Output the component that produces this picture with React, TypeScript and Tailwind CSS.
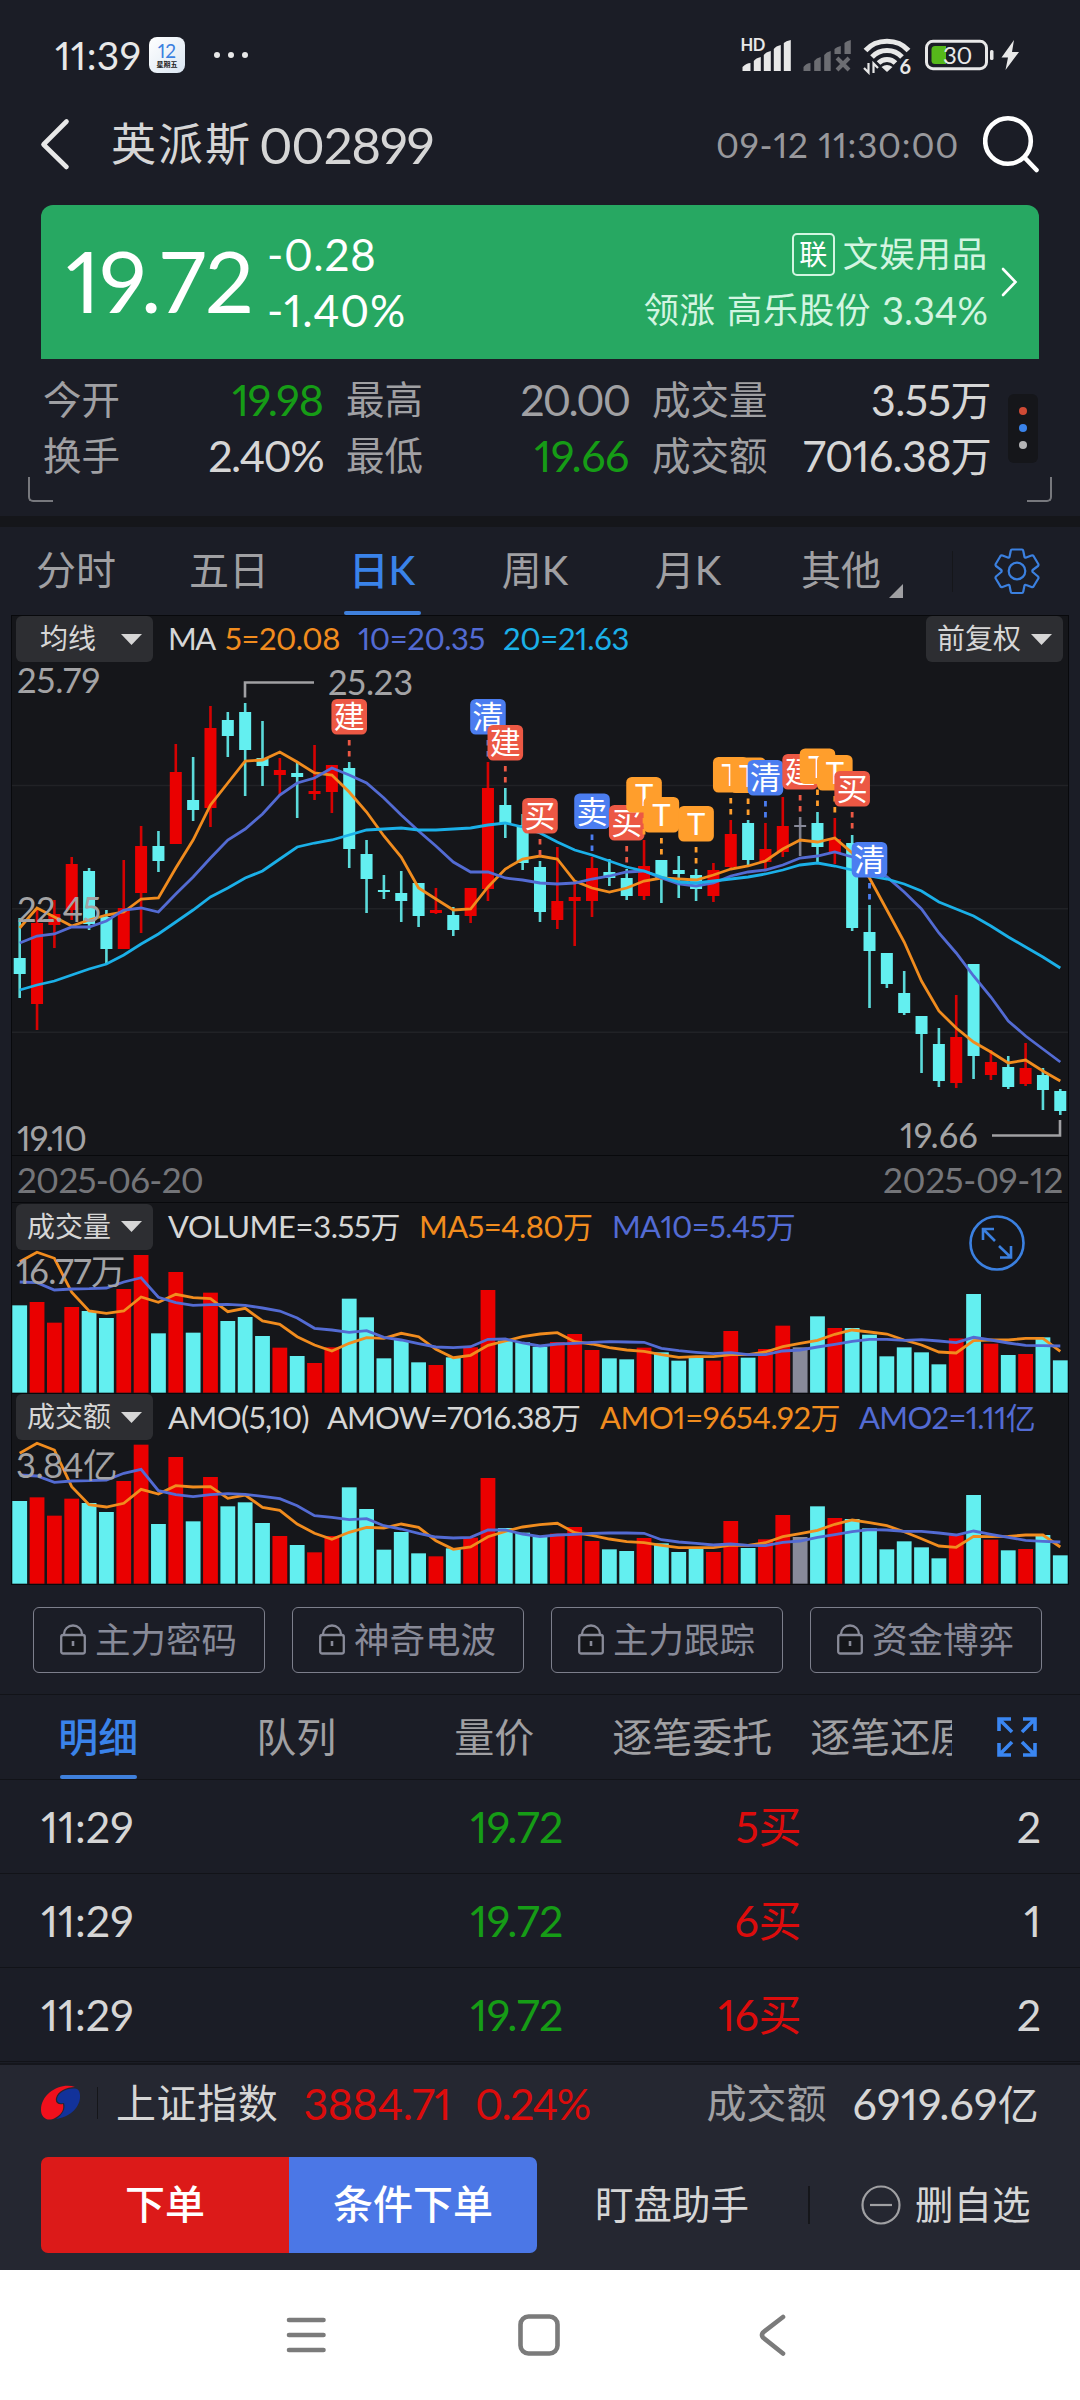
import clsx from 'clsx'
import React from 'react'

// ---------------- Data ----------------
// [kind, high, body top, body bottom, low], r = up, c = down, g = flat
type Candle = [string, number, number, number, number]

const candles: Candle[] = [
  ['c', 258, 298, 314, 338], ['r', 248, 263, 344, 370], ['r', 240, 254, 265, 288], ['r', 197, 204, 250, 260],
  ['c', 208, 211, 264, 270], ['c', 250, 257, 289, 303], ['r', 200, 248, 289, 289], ['r', 166, 186, 233, 273],
  ['c', 171, 186, 201, 212], ['r', 84, 112, 184, 184], ['c', 97, 140, 150, 161], ['r', 46, 68, 148, 167],
  ['c', 52, 60, 76, 97], ['c', 43, 52, 90, 136], ['c', 61, 98, 106, 126], ['r', 98, 110, 115, 136],
  ['c', 102, 113, 117, 158], ['r', 85, 131, 134, 140], ['r', 105, 105, 132, 153], ['c', 102, 108, 189, 208],
  ['c', 180, 194, 219, 253], ['c', 215, 230, 232, 239], ['c', 211, 233, 241, 262], ['c', 223, 223, 256, 267],
  ['r', 228, 250, 253, 254], ['c', 247, 255, 270, 276], ['r', 228, 228, 256, 263], ['r', 102, 128, 229, 241],
  ['c', 128, 145, 163, 178], ['c', 154, 165, 203, 210], ['c', 201, 207, 252, 262], ['r', 187, 241, 260, 269],
  ['r', 220, 237, 241, 286], ['r', 197, 208, 241, 257], ['c', 199, 212, 218, 226], ['c', 209, 218, 236, 240],
  ['r', 180, 206, 236, 240], ['c', 200, 200, 218, 243], ['c', 196, 210, 214, 238], ['c', 209, 215, 229, 241],
  ['r', 203, 210, 236, 242], ['r', 160, 174, 207, 210], ['c', 160, 163, 200, 205], ['r', 163, 189, 202, 211],
  ['r', 137, 166, 192, 197], ['g', 157, 165, 167, 196], ['c', 152, 163, 187, 203], ['r', 158, 179, 193, 204],
  ['c', 175, 183, 268, 271], ['c', 245, 272, 291, 348], ['c', 293, 293, 324, 328], ['c', 311, 333, 353, 355],
  ['c', 356, 356, 374, 413], ['c', 368, 384, 421, 427], ['r', 335, 377, 423, 428], ['c', 304, 304, 396, 419],
  ['r', 390, 402, 415, 420], ['c', 396, 407, 427, 429], ['r', 383, 408, 424, 426], ['c', 408, 415, 430, 450],
  ['c', 429, 431, 451, 455],
]

const ma5 = [268, 248, 257, 266, 260, 255, 252, 239, 238, 208, 180, 145, 123, 101, 100, 92, 102, 113, 115, 132, 152, 176, 197, 228, 239, 250, 249, 227, 209, 199, 196, 199, 221, 228, 232, 228, 221, 218, 219, 220, 215, 209, 206, 201, 189, 180, 182, 178, 193, 218, 250, 282, 321, 351, 368, 382, 392, 403, 400, 411, 421]
const ma10 = [283, 276, 274, 267, 267, 261, 250, 248, 252, 234, 217, 198, 180, 169, 154, 135, 123, 118, 108, 115, 123, 138, 155, 171, 186, 202, 212, 212, 218, 220, 223, 224, 223, 219, 216, 212, 211, 218, 224, 226, 223, 216, 212, 210, 205, 198, 196, 192, 197, 206, 217, 232, 249, 273, 293, 316, 337, 361, 376, 389, 402]
const ma20 = [330, 325, 321, 315, 309, 304, 295, 284, 274, 262, 250, 237, 228, 218, 211, 199, 187, 183, 180, 175, 170, 169, 168, 170, 170, 169, 168, 165, 163, 167, 173, 182, 190, 195, 201, 207, 211, 217, 222, 223, 221, 219, 217, 214, 210, 205, 203, 206, 210, 216, 219, 224, 231, 242, 249, 256, 266, 277, 287, 297, 308]

// bar tops and average lines, three units to a pixel
const volume = {
  base: 788,
  top: [526, 516, 578, 531, 543, 564, 477, 375, 610, 426, 608, 488, 573, 561, 618, 653, 678, 699, 652, 506, 562, 685, 630, 697, 705, 682, 652, 480, 632, 637, 650, 636, 612, 660, 685, 688, 653, 667, 692, 682, 692, 603, 683, 657, 587, 652, 559, 594, 594, 614, 679, 652, 667, 703, 625, 492, 641, 675, 672, 622, 691],
  avg5: [395, 367, 385, 487, 543, 550, 543, 501, 517, 493, 503, 506, 545, 535, 573, 583, 620, 645, 663, 640, 623, 625, 610, 620, 658, 683, 676, 646, 633, 620, 612, 608, 635, 642, 653, 660, 664, 674, 682, 680, 680, 674, 674, 666, 650, 640, 631, 613, 600, 606, 612, 630, 645, 666, 669, 632, 630, 630, 625, 625, 664],
  avg10: [456, 458, 480, 477, 476, 474, 456, 443, 502, 518, 526, 524, 523, 526, 534, 543, 564, 595, 600, 607, 602, 622, 630, 641, 651, 653, 650, 628, 627, 639, 648, 642, 640, 637, 635, 636, 637, 655, 662, 667, 671, 668, 674, 674, 663, 660, 651, 643, 634, 628, 628, 631, 629, 633, 638, 622, 630, 639, 646, 647, 648],
}
const amount = {
  base: 1361,
  top: [1113, 1102, 1157, 1106, 1119, 1146, 1053, 944, 1182, 981, 1174, 1041, 1129, 1117, 1179, 1218, 1245, 1267, 1218, 1072, 1137, 1259, 1206, 1270, 1279, 1255, 1223, 1044, 1194, 1208, 1220, 1211, 1191, 1233, 1258, 1263, 1224, 1240, 1266, 1257, 1266, 1173, 1254, 1228, 1155, 1221, 1129, 1164, 1167, 1195, 1258, 1234, 1252, 1285, 1216, 1095, 1229, 1261, 1257, 1215, 1276],
  avg5: [970, 940, 960, 1070, 1124, 1131, 1120, 1078, 1092, 1067, 1071, 1070, 1105, 1095, 1132, 1141, 1182, 1210, 1228, 1207, 1192, 1194, 1182, 1192, 1232, 1258, 1251, 1220, 1204, 1191, 1184, 1180, 1208, 1216, 1227, 1235, 1238, 1246, 1253, 1253, 1253, 1245, 1246, 1238, 1220, 1211, 1201, 1183, 1170, 1178, 1187, 1205, 1226, 1248, 1252, 1219, 1220, 1219, 1215, 1215, 1251],
  avg10: [1035, 1038, 1057, 1053, 1052, 1050, 1030, 1018, 1082, 1094, 1100, 1094, 1091, 1093, 1099, 1106, 1127, 1157, 1162, 1169, 1166, 1187, 1197, 1210, 1221, 1224, 1222, 1200, 1200, 1212, 1220, 1215, 1213, 1210, 1209, 1209, 1210, 1229, 1236, 1240, 1245, 1242, 1246, 1247, 1237, 1233, 1222, 1214, 1205, 1199, 1200, 1204, 1204, 1209, 1215, 1203, 1213, 1222, 1231, 1234, 1236],
}

// [candle index, top, label]
const markers: [number, number, string][] = [
  [19, 39, '建'], [27, 39, '清'], [28, 65, '建'], [30, 138, '买'], [33, 133.5, '卖'], [35, 145, '买'],
  [36, 117, 'T'], [37, 137, 'T'], [39, 146, 'T'], [41, 97, 'T'], [42, 97.5, 'T'], [43, 100, '清'],
  [45, 94, '建'], [46, 88.5, 'T'], [47, 95, 'T'], [48, 111, '买'], [49, 182, '清'],
]

const RED = '#ea0000'
const CYAN = '#63eff0'
const GRAY = '#888a9a'
const ORANGE = '#f18c1e'
const INDIGO = '#536bd3'
const SKY = '#1bb0e8'

const xAt = (i: number) => 19.7 + i * 17.343
const fill = (kind: string) => (kind === 'r' ? RED : kind === 'c' ? CYAN : GRAY)
const badge = (label: string) =>
  label === 'T' ? '#ff9e2c' : label === '清' || label === '卖' ? '#4b7df0' : '#ec5844'
const line = (ys: number[]) => ys.map((y, i) => `${xAt(i).toFixed(1)},${y.toFixed(1)}`).join(' ')

// ---------------- Icons ----------------
const StatusIcons = () => (
  <svg width="290" height="40" viewBox="738 35 290 40" className="font-bold">
    <text x="740.5" y="51" fontSize="16.5" fill="#e8e8e8" letterSpacing="-0.5">HD</text>
    <g fill="#e8e8e8">
      <path d="M742.5 71v-4q4-4 8-4v8zM753.8 71V61q2-3 7-4v14zM763.8 71V55q2-3 7-4v20zM773.8 71V49q2-3 7-4v26zM783.8 71V43q2-2 7-3v31z" />
    </g>
    <g fill="#6c6d72">
      <path d="M803.5 71v-4q3-4 7-4v8zM814.2 71V61q2-3 6.5-4v14zM824.2 71V55q2-3 6.5-4v20zM834.5 54v-5q2-2 6.3-3v8zM844.5 54V43q2-2 6.3-3v14z" />
    </g>
    <path d="M837 58l12 12M849 58l-12 12" stroke="#6c6d72" strokeWidth="4" />
    <g fill="none" stroke="#e8e8e8" strokeWidth="5">
      <path d="M865.5 50.5q8-9.300 21.500-9.300t21.500 9.300" />
      <path d="M872 57q6-6.500 15-6.500t15 6.500" />
      <path d="M878.500 63q3.500-3.500 8.500-3.500t8.500 3.500" />
    </g>
    <path d="M881.500 67q5.500-4 11 0l-5.500 5z" fill="#e8e8e8" />
    <path d="M868.500 63v9.500l-4.500-4.500M873.500 73v-9.500l4.500 4.500" stroke="#e8e8e8" strokeWidth="2.200" fill="none" />
    <text x="899.500" y="73.500" fontSize="20" fill="#e8e8e8">6</text>
    <rect x="926.500" y="41.300" width="60" height="27.400" rx="6.500" fill="none" stroke="#e8e8e8" strokeWidth="3" />
    <path d="M935 46h11v18h-11q-3.500 0-3.500-3.500v-11q0-3.500 3.500-3.500z" fill="#56b81a" />
    <rect x="990" y="50" width="3.500" height="10" rx="1.500" fill="#e8e8e8" />
    <text x="943" y="64" fontSize="24" fontWeight="400" fill="#e8e8e8" letterSpacing="-0.300">30</text>
    <path d="M1014 40l-12.500 17.500h6.500l-2.500 12.500 13.500-18h-7z" fill="#e8e8e8" />
  </svg>
)

const Caret = () => (
  <svg width="21" height="11" viewBox="0 0 21 11">
    <path d="M0 0h21L10.500 11z" fill="#d6d6d6" />
  </svg>
)

const Gear = () => (
  <svg width="48" height="48" viewBox="-24 -24 48 48" fill="none" stroke="#3b80e0" strokeWidth="2.200" strokeLinejoin="round">
    <path d="M-5-21.500H5Q6-21.500 6.300-20L7.500-14Q8-13 9.200-13.500L14.500-15.500Q15.800-16 16.500-15L21.300-7Q21.800-6 21-5L15.700-1Q15 0 15.700 1L21 5.500Q21.800 6.500 21.300 7.500L16.500 15.500Q15.800 16.500 14.500 16L9.200 14Q8 13.500 7.500 14.500L6.300 20.500Q6 22 5 22H-5Q-6 22-6.300 20.500L-7.500 14.500Q-8 13.500-9.200 14L-14.500 16Q-15.800 16.500-16.500 15.500L-21.300 7.500Q-21.800 6.500-21 5.500L-15.700 1Q-15 0-15.700-1L-21-5Q-21.800-6-21.300-7L-16.500-15Q-15.800-16-14.500-15.500L-9.200-13.500Q-8-13-7.500-14L-6.300-20Q-6-21.500-5-21.500Z" />
    <circle r="8.300" />
  </svg>
)

const Lock = () => (
  <svg width="26" height="31" viewBox="0 0 26 31" fill="none" stroke="#888a98" strokeWidth="2.300">
    <path d="M4 11V10a9 8.500 0 0 1 18 0v1" fill="#15161a" />
    <rect x="1.200" y="11" width="23.600" height="18.500" rx="2" fill="#15161a" />
    <path d="M13 17v5" strokeWidth="2.600" />
  </svg>
)

const Expand = () => (
  <svg width="40" height="40" viewBox="0 0 40 40" fill="none" stroke="#3a86f2" strokeWidth="3.600">
    <path d="M14 2H2v12M2 2l13 13M26 2h12v12M38 2L25 15M14 38H2V26M2 38l13-13M26 38h12V26M38 38L25 25" />
  </svg>
)

const Logo = () => (
  <svg width="40" height="36" viewBox="0 0 40 36">
    <path d="M34 2C20-3 0 8 0 25c0 8 7 12 14 8 7-4 9-8 8-14-5 1-8-1-7-6C17 6 25 2 34 2z" fill="#f0101c" />
    <path d="M36 4C28 2 17 7 16 14c0 4 4 5 7 4 2 6-2 12-8 16 15-2 25-13 24-24-.3-3-1-5-3-6z" fill="#12329a" />
  </svg>
)

// ---------------- Chart pieces ----------------
const Dropdown = ({ label, className }: { label: string; className?: string }) => (
  <div className={clsx('flex h-[46px] w-[137px] items-center justify-between rounded-[6px] bg-[#2d2e32] pr-[11px] text-[28px] text-[#d6d6d6]', className)}>
    <span className="-mt-0.5">{label}</span>
    <Caret />
  </div>
)

const Bars = ({ data, offset, height, label, labelY }: { data: typeof volume; offset: number; height: number; label: string; labelY: number }) => {
  const y = (v: number) => v / 3 - offset
  return (
    <svg width="1056" height={height} viewBox={`12 0 1056 ${height}`} className="block">
      {data.top.map((t, i) => (
        <rect key={i} x={xAt(i) - 7.4} y={y(t)} width="14.800" height={(data.base - t) / 3} fill={fill(candles[i][0])} />
      ))}
      <polyline points={line(data.avg5.map(y))} fill="none" stroke={ORANGE} strokeWidth="2.800" />
      <polyline points={line(data.avg10.map(y))} fill="none" stroke={INDIGO} strokeWidth="2.800" />
      <text x="16" y={labelY} fontSize="34.500" fill="#a3a3a5" letterSpacing="-0.500">{label}</text>
    </svg>
  )
}

const KLine = () => (
  <svg width="1056" height="495" viewBox="12 0 1056 495" className="block">
    {[125.500, 248.700, 372.300].map((y) => (
      <path key={y} d={`M12 ${y}H1068`} stroke="#212226" strokeWidth="1.500" />
    ))}
    {candles.map(([k, hi, t, b, lo], i) => (
      <g key={i} fill={fill(k)}>
        <rect x={xAt(i) - 1.3} y={hi} width="2.600" height={lo - hi} opacity="0.900" />
        <rect x={xAt(i) - 6} y={t} width="12" height={b - t} />
      </g>
    ))}
    <polyline points={line(ma5)} fill="none" stroke={ORANGE} strokeWidth="2.800" />
    <polyline points={line(ma10)} fill="none" stroke={INDIGO} strokeWidth="2.800" />
    <polyline points={line(ma20)} fill="none" stroke={SKY} strokeWidth="2.800" />
    <path d="M245 37.500V22.500H314M1060 460V475.500H992" fill="none" stroke="#a0a0a3" strokeWidth="2.600" />
    <g fontSize="34.500" fill="#a3a3a5">
      <text x="17" y="33" letterSpacing="0">25.79</text>
      <text x="17" y="262" letterSpacing="-0.600">22.45</text>
      <text x="17" y="491" letterSpacing="-0.900">19.10</text>
      <text x="328" y="34.500" letterSpacing="-0.200">25.23</text>
      <text x="900" y="487.500" letterSpacing="0">19.66</text>
    </g>
    {markers.map(([i, y, label]) => (
      <g key={i}>
        <path d={`M${xAt(i)} ${y + 41}v17`} stroke={badge(label)} strokeWidth="2.800" strokeDasharray="5.500 5.500" />
        <rect x={xAt(i) - 17.8} y={y} width="35.600" height="35.600" rx="5.500" fill={badge(label)} />
        <text x={xAt(i)} y={y + 29} fontSize="31" fill="#fff" textAnchor="middle">{label}</text>
      </g>
    ))}
  </svg>
)

// ---------------- Page ----------------
const chartTabs = ['分时', '五日', '日K', '周K', '月K', '其他']
const detailTabs = ['明细', '队列', '量价', '逐笔委托', '逐笔还原']
const locked = ['主力密码', '神奇电波', '主力跟踪', '资金博弈']
const trades = [
  ['11:29', '19.72', '5买', '2'],
  ['11:29', '19.72', '6买', '1'],
  ['11:29', '19.72', '16买', '2'],
]

const App = () => {
  return (
    <div className="flex h-[2400px] w-[1080px] flex-col overflow-hidden bg-[#1b1d26] font-['Lato','Noto_Sans_CJK_SC',sans-serif] leading-none whitespace-nowrap text-[#d6d6d6] proportional-nums">
      {/* ------------ Status bar ------------ */}
      <div className="flex h-[110px] items-center pl-[55px] pr-[52px]">
        <span className="w-[94px] text-[39px] tracking-[0.01em] text-[#e8e8e8]">11:39</span>
        <div className="flex h-9 w-9 flex-col items-center rounded-[8px] bg-linear-to-br from-white to-[#dbe6f2] pt-[5px]">
          <span className="text-[19px] leading-[18px] text-[#3b80e0]">12</span>
          <span className="mt-px text-[7px] font-bold text-[#222]">星期五</span>
        </div>
        <div className="ml-[29px] flex gap-2">
          <i className="size-[6px] rounded-full bg-[#e8e8e8]" />
          <i className="size-[6px] rounded-full bg-[#e8e8e8]" />
          <i className="size-[6px] rounded-full bg-[#e8e8e8]" />
        </div>
        <div className="ml-auto">
          <StatusIcons />
        </div>
      </div>

      {/* ------------ Title ------------ */}
      <div className="flex h-[95px] items-center pb-[27px] pl-10 pr-[41px]">
        <svg width="30" height="54" viewBox="0 0 30 54" fill="none" stroke="#e8e8e8" strokeWidth="4.600" strokeLinecap="round" strokeLinejoin="round">
          <path d="M26.500 4.500L3.500 27.500 26.500 50" />
        </svg>
        <span className="ml-[41px] text-[45px] tracking-[2px]">英派斯</span>
        <span className="ml-[7px] text-[51px] tracking-[-0.024em]">002899</span>
        <span className="ml-auto text-[35px] tracking-[0.022em] text-[#98989c]">09-12 11:30:00</span>
        <svg width="56" height="58" viewBox="0 0 56 58" fill="none" stroke="#fff" strokeWidth="4.600" strokeLinecap="round" className="ml-[24px]">
          <circle cx="25" cy="26" r="22.800" />
          <path d="M42 43l11.500 12" />
        </svg>
      </div>

      {/* ------------ Price card ------------ */}
      <div className="mx-[41px] flex h-[154px] items-center rounded-t-[12px] bg-[#27a862] pl-[25px] pr-[21px] text-white">
        <span className="-mt-1 w-[201px] text-[86px] tracking-[-0.006em]">19.72</span>
        <div className="text-[44px] leading-[56px] tracking-[0.016em]">
          <div>-0.28</div>
          <div>-1.40%</div>
        </div>
        <div className="ml-auto flex flex-col items-end text-[35.500px] leading-[56px] text-[#d3f5e1]">
          <div className="flex items-center gap-[8px]">
            <span className="flex size-[43px] items-center justify-center rounded-[5px] border-2 border-[#d3f5e1] text-[28px] text-white">联</span>
            <span className="tracking-[0.800px]">文娱用品</span>
          </div>
          <div className="flex gap-[11px] tracking-[0.600px]">
            <span>领涨</span>
            <span>高乐股份</span>
            <span className="text-[38px] tracking-normal">3.34%</span>
          </div>
        </div>
        <svg width="18" height="32" viewBox="0 0 18 32" fill="none" stroke="#fff" strokeWidth="2.600" strokeLinecap="round" className="ml-[12px]">
          <path d="M3 3l12.500 13L3 29" />
        </svg>
      </div>

      {/* ------------ Quote stats ------------ */}
      <div className="flex h-[157px] flex-col">
        <div className="flex h-[118px] items-center pl-[43px] pr-[42px] pt-[20px]">
          <div className="grid w-[948px] grid-cols-[280px_306px_362px] text-[43px] leading-[55px]">
            <div className="flex justify-between">
              <span className="text-[38.500px] text-[#a0a0a3]">今开</span>
              <span className="tracking-[-0.024em] text-[#169c16]">19.98</span>
            </div>
            <div className="flex justify-between pl-[23px]">
              <span className="text-[38.500px] text-[#a0a0a3]">最高</span>
              <span className="tracking-[-0.046em] text-[#a0a0a3]">20.00</span>
            </div>
            <div className="flex justify-between pl-[23px]">
              <span className="text-[38.500px] text-[#a0a0a3]">成交量</span>
              <span className="tracking-[-0.012em]">3.55<span className="text-[41px]">万</span></span>
            </div>
            <div className="flex justify-between">
              <span className="text-[38.500px] text-[#a0a0a3]">换手</span>
              <span className="tracking-[-0.038em]">2.40%</span>
            </div>
            <div className="flex justify-between pl-[23px]">
              <span className="text-[38.500px] text-[#a0a0a3]">最低</span>
              <span className="tracking-[-0.010em] text-[#169c16]">19.66</span>
            </div>
            <div className="flex justify-between pl-[23px]">
              <span className="text-[38.500px] text-[#a0a0a3]">成交额</span>
              <span className="tracking-[-0.016em]">7016.38<span className="text-[41px]">万</span></span>
            </div>
          </div>
          <div className="ml-auto flex h-[69px] w-[30px] flex-col items-center justify-center gap-[9px] rounded-[6px] bg-[#15161a]">
            <i className="size-2 rounded-full bg-[#cf4a35]" />
            <i className="size-2 rounded-full bg-[#3a83ea]" />
            <i className="size-2 rounded-full bg-[#b4b4b6]" />
          </div>
        </div>
        <div className="flex justify-between px-7">
          <div className="h-[25px] w-[25px] rounded-bl-[5px] border-b-[2.500px] border-l-[2.500px] border-[#77787d]" />
          <div className="h-[25px] w-[25px] rounded-br-[5px] border-b-[2.500px] border-r-[2.500px] border-[#77787d]" />
        </div>
      </div>
      <div className="h-[11px] bg-[#15161a]" />

      {/* ------------ Chart tabs ------------ */}
      <div className="flex h-[88px] items-center text-[40px] text-[#a0a0a3]">
        {chartTabs.map((tab, i) => (
          <div key={tab} className={clsx('relative flex h-full w-[153px] items-center justify-center pb-[2px] pr-px', i === 2 && 'font-medium text-[#3a83ea]')}>
            {tab}
            {i === 2 && <div className="absolute bottom-0 h-1 w-[77px] rounded-full bg-[#3f80dc]" />}
            {i === 5 && (
              <svg width="14" height="14" viewBox="0 0 14 14" className="absolute bottom-[17px] right-[15px]">
                <path d="M14 0v14H0z" fill="#a0a0a3" />
              </svg>
            )}
          </div>
        ))}
        <div className="ml-[34px] h-[41px] w-px bg-[#15161a]" />
        <div className="ml-[40px]">
          <Gear />
        </div>
      </div>

      {/* ------------ K line ------------ */}
      <div className="mx-auto w-[1058px] border border-[#08090c] bg-[#15161a]">
        <div className="flex h-[44px] items-start text-[31px]">
          <Dropdown label="均线" className="ml-[4px] pl-[24px]" />
          <div className="flex h-[46px] flex-1 items-center pb-px pl-[15px]">
            <span className="w-[57px] tracking-[-0.050em]">MA</span>
            <span className="w-[133px] tracking-[-0.014em] text-[#f18c1e]">5=20.08</span>
            <span className="w-[145px] tracking-[-0.014em] text-[#536bd3]">10=20.35</span>
            <span className="tracking-[-0.010em] text-[#1bb0e8]">20=21.63</span>
          </div>
          <Dropdown label="前复权" className="mr-[5px] pl-[11px]" />
        </div>
        <KLine />
        <div className="flex h-[48px] items-center justify-between border-y border-[#08090c] px-[5px] text-[35px] text-[#747579]">
          <span className="tracking-[-0.021em]">2025-06-20</span>
          <span className="tracking-[-0.010em]">2025-09-12</span>
        </div>

        {/* ------------ Volume ------------ */}
        <div className="relative">
          <div className="flex h-[47px] items-center text-[31px]">
            <Dropdown label="成交量" className="ml-[4px] pl-[11px]" />
            <span className="ml-[15px] w-[251px] tracking-[-0.012em]">VOLUME=3.55<span className="text-[30px]">万</span></span>
            <span className="w-[193px] tracking-[-0.020em] text-[#f18c1e]">MA5=4.80<span className="text-[30px]">万</span></span>
            <span className="tracking-[-0.022em] text-[#536bd3]">MA10=5.45<span className="text-[30px]">万</span></span>
          </div>
          <Bars data={volume} offset={120} height={143} label="16.77万" labelY={34} />
          <svg width="58" height="58" viewBox="-29 -29 58 58" fill="none" stroke="#3b80e0" strokeWidth="2.600" className="absolute right-[42px] top-[11px]">
            <circle r="26.500" />
            <path d="M-2-2l-12-12M-14-3v-11h11M2 3l12 11.500M14 3v11.500H3" />
          </svg>
        </div>

        {/* ------------ Amount ------------ */}
        <div className="border-t border-[#08090c]">
          <div className="flex h-[47px] items-center pb-px text-[31px]">
            <Dropdown label="成交额" className="ml-[4px] pl-[11px]" />
            <span className="ml-[15px] w-[159px] tracking-[-0.018em]">AMO(5,10)</span>
            <span className="w-[273px] tracking-[-0.028em]">AMOW=7016.38<span className="text-[30px]">万</span></span>
            <span className="w-[259px] tracking-[-0.014em] text-[#f18c1e]">AMO1=9654.92<span className="text-[30px]">万</span></span>
            <span className="tracking-[-0.022em] text-[#536bd3]">AMO2=1.11<span className="text-[30px]">亿</span></span>
          </div>
          <Bars data={amount} offset={311} height={143} label="3.84亿" labelY={37} />
        </div>
      </div>

      {/* ------------ Locked indicators ------------ */}
      <div className="flex h-[110px] gap-[27px] border-b border-[#121318] px-[33px] pt-[22px]">
        {locked.map((name) => (
          <div key={name} className="flex h-[66px] w-[232px] items-center justify-center gap-[9px] rounded-[6px] border border-[#7d7f8c] pb-px pr-px text-[35.500px] text-[#888a98]">
            <Lock />
            {name}
          </div>
        ))}
      </div>

      {/* ------------ Detail tabs ------------ */}
      <div className="flex h-[85px] items-center border-b border-[#121318] text-[40px] text-[#a0a0a3]">
        <div className="flex h-full w-[952px] overflow-hidden">
          {detailTabs.map((tab, i) => (
            <div key={tab} className={clsx('relative flex h-full w-[198px] shrink-0 items-center justify-center pr-[1.500px]', i === 0 && 'font-medium text-[#3a83ea]')}>
              {tab}
              {i === 0 && <div className="absolute bottom-0 h-1 w-[77px] rounded-full bg-[#3f80dc]" />}
            </div>
          ))}
        </div>
        <div className="ml-[45px]">
          <Expand />
        </div>
      </div>

      {/* ------------ Trades ------------ */}
      <div className="flex h-[283px] flex-col overflow-hidden">
        {trades.map(([time, price, size, count], i) => (
          <div key={i} className="grid h-[94px] shrink-0 grid-cols-[260px_262px_238px_240px] items-center border-b border-[#121318] px-[41px] text-[43px]">
            <span>{time}</span>
            <span className="text-right tracking-[-0.010em] text-[#169c16]">{price}</span>
            <span className="text-right tracking-[-0.010em] text-[#dc0c0c]">{size}</span>
            <span className="text-right">{count}</span>
          </div>
        ))}
      </div>

      {/* ------------ Footer ------------ */}
      <div className="h-[207px] border-t-2 border-[#15161c] bg-[#252731]">
        <div className="flex h-[76px] items-center px-[41px] text-[40px]">
          <Logo />
          <div className="ml-[16px] h-8 w-px bg-[#15161a]" />
          <span className="ml-[18px] tracking-[0.600px]">上证指数</span>
          <span className="ml-[25px] text-[43px] tracking-[-0.010em] text-[#dc0c0c]">3884.71</span>
          <span className="ml-[24px] text-[43px] tracking-[-0.034em] text-[#dc0c0c]">0.24%</span>
          <span className="ml-auto text-[#a0a0a3]">成交额</span>
          <span className="ml-[26px] text-[43px] tracking-[0.005em]">6919.69<span className="text-[41px]">亿</span></span>
        </div>
        <div className="flex items-center pl-[41px] pt-[16px] text-[38.500px]">
          <div className="flex h-24 w-[496px] overflow-hidden rounded-[7px] text-[40px] font-medium text-white">
            <div className="flex flex-1 items-center justify-center bg-[#dc1a19] pb-[2px]">下单</div>
            <div className="flex flex-1 items-center justify-center bg-[#4b77e6] pb-[2px]">条件下单</div>
          </div>
          <span className="-mt-px ml-[58px]">盯盘助手</span>
          <div className="ml-[59px] h-[38px] w-[2px] bg-[#15161a]" />
          <svg width="40" height="40" viewBox="-20 -20 40 40" fill="none" stroke="#a0a0a3" strokeWidth="2.200" className="ml-[51px]">
            <circle r="18.500" />
            <path d="M-11 0h22" />
          </svg>
          <span className="-mt-px ml-[14px]">删自选</span>
        </div>
      </div>

      {/* ------------ Navigation ------------ */}
      <div className="flex flex-1 items-center bg-white">
        <svg width="1080" height="60" viewBox="0 0 1080 60" fill="none" stroke="#7b7b7b" strokeWidth="4.600" strokeLinecap="round" strokeLinejoin="round">
          <path d="M289 15h34.500M289 30h34.500M289 45h34.500" />
          <rect x="520.500" y="11.500" width="37" height="37" rx="8" />
          <path d="M783 12L763 27.500Q761 30 763 32.500L783 48.500" />
        </svg>
      </div>
    </div>
  )
}

export default App
